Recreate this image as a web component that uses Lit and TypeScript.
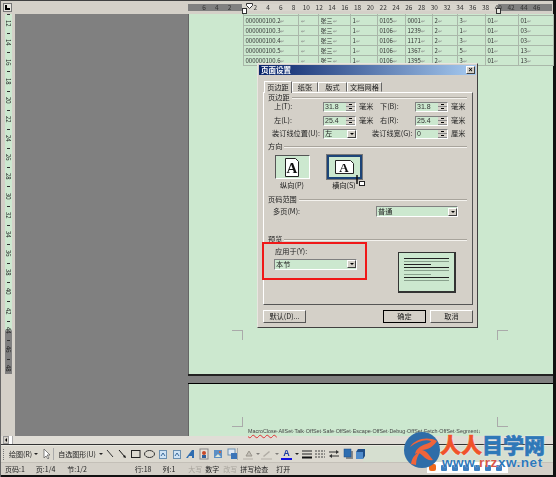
import { LitElement, html, css, svg } from "lit";
import { customElement } from "lit/decorators.js";

const rows = [
  ["000000100.2", "", "张三", "1", "0105", "0001", "2", "3", "01", "01"],
  ["000000100.3", "", "张三", "1", "0106", "1239", "2", "1", "01", "03"],
  ["000000100.4", "", "张三", "1", "0106", "1171", "2", "3", "01", "03"],
  ["000000100.5", "", "张三", "1", "0106", "1367", "2", "5", "01", "13"],
  ["000000100.6", "", "张三", "1", "0106", "1395", "2", "3", "01", "13"],
];
const hNums = ["6", "4", "2", "", "2", "4", "6", "8", "10", "12", "14", "16", "18", "20", "22", "24", "26", "28", "30", "32", "34", "36", "38", "40", "42", "44", "46"];
const vNums = Array.from({ length: 19 }, (_, i) => String(12 + i * 2));

@customElement("app-root")
export class AppRoot extends LitElement {
  static styles = css`
    :host { display: block; width: 556px; height: 477px; overflow: hidden; position: relative; background: #111; font-family: "Noto Sans CJK SC", "Liberation Sans", sans-serif; }
    .app { display: flex; flex-direction: column; width: 553px; height: 477px; border-top: 1px solid #404040; border-left: 1px solid #666; box-sizing: border-box; color: #222; font-size: 7px; line-height: 1; background: #d4d0c8; filter: blur(.25px); }

    .hruler { height: 13px; display: flex; align-items: flex-start; flex: none; position: relative; }
    .corner { width: 9px; height: 9px; margin: 2px 0 0 2px; border: 1px solid #777; box-sizing: border-box; background: #e8e6e0; display: flex; align-items: flex-end; padding: 1px; }
    .corner i { display: block; width: 5px; height: 5px; border-left: 2px solid #000; border-bottom: 2px solid #000; box-sizing: border-box; }
    .track { margin: 3px 0 0 176px; width: 364px; height: 7px; display: flex; padding-left: 9.6px; box-sizing: border-box; background: linear-gradient(to right, #808080 54px, #d8d5cd 54px, #d8d5cd 310px, #808080 310px); }
    .track span { width: 12.8px; flex: none; text-align: center; font-size: 6.5px; line-height: 7px; color: #333; }
    .indent { position: absolute; left: 245px; top: 2px; }
    .hang { position: absolute; left: 241px; top: 7px; width: 5px; height: 6px; background: #fff; border: 1px solid #333; box-sizing: border-box; }
    .hang.r { left: 495px; background: #e8e6e0; }

    .main { flex: 1; display: flex; min-height: 0; }
    .left { width: 14px; flex: none; display: flex; }
    .vtrack { width: 7px; margin-left: 4px; height: 360px; background: linear-gradient(to bottom, #cce8cf 315px, #808080 317px); overflow: hidden; }
    .vtrack span { display: flex; height: 19.17px; align-items: center; justify-content: center; font-size: 6px; writing-mode: vertical-rl; color: #222; background: linear-gradient(#333, #333) center top / 3px 1px no-repeat; }
    .canvas { flex: 1; min-width: 0; background: #808080; padding-left: 173px; display: flex; flex-direction: column; }
    .page { background: #cce8cf; position: relative; flex: none; border-left: 1px solid #666; }
    .page.one { height: 360px; }
    .page.two { height: 52px; }
    .gap { height: 10px; flex: none; border-top: 2px solid #222; border-bottom: 1px solid #000; box-sizing: border-box; }

    table { margin: 0 0 0 53.5px; width: 310.5px; border-collapse: collapse; table-layout: fixed; font-size: 6px; color: #333; }
    td { border: 1px solid #aab8aa; height: 9.97px; padding: 0 0 0 2px; white-space: nowrap; overflow: hidden; line-height: 8px; box-sizing: border-box; }
    tr.stub td { height: 1.7px; font-size: 0; line-height: 0; border-top: 0; }
    td small { color: #888; font-size: 5px; }

    .crop { position: absolute; width: 11px; height: 10px; border: 0 solid #aaa; box-sizing: border-box; }
    .crop.a { left: 43px; top: 316px; border-top-width: 1px; border-right-width: 1px; }
    .crop.b { left: 308px; top: 316px; border-top-width: 1px; border-left-width: 1px; }
    .crop.c { left: 43px; top: 33px; border-bottom-width: 1px; border-right-width: 1px; }
    .crop.d { left: 308px; top: 33px; border-bottom-width: 1px; border-left-width: 1px; }
    .footer { position: absolute; left: 59px; top: 43px; font: 5.4px/9px "Liberation Sans", sans-serif; color: #444; white-space: nowrap; }
    .footer u { text-decoration: underline wavy #d33 1px; }

    .hscroll { height: 8px; flex: none; display: flex; background: #e0ddd6; border-bottom: 1px solid #333; box-sizing: content-box; }
    .hscroll .sp { width: 2px; }
    .hscroll b { width: 6px; height: 8px; background: #d4d0c8; border: 1px solid #999; box-sizing: border-box; display: flex; align-items: center; justify-content: center; }
    .hscroll b i { border: 2px solid transparent; border-right-color: #000; border-left: 0; }
    .hscroll em { width: 3px; background: #fff; border-right: 1px solid #aaa; }

    .toolbar { height: 17px; flex: none; display: flex; align-items: center; background: linear-gradient(to right, #dcd9d0 362px, #d6dfd0 362px); position: relative; border-top: 1px solid #e8e8e0; box-sizing: border-box; padding-left: 2px; color: #222; }
    .grip { width: 1px; height: 11px; border-left: 1px dotted #777; margin-right: 4px; flex: none; }
    .toolbar svg { display: block; flex: none; }
    .sep { width: 1px; height: 12px; background: #aaa; flex: none; }
    .caret { width: 0; height: 0; border: 2px solid transparent; border-top: 2px solid #222; border-bottom: 0; flex: none; }
    .caret.dim { opacity: .5; }
    .tbtext { flex: none; white-space: nowrap; }
    .fontA { width: 11px; text-align: center; color: #1a3aa0; font: 700 9px/9px "Liberation Sans", sans-serif; border-bottom: 2px solid #1010e0; flex: none; }

    .status { height: 13px; flex: none; display: flex; align-items: center; background: #d4d0c8; white-space: nowrap; color: #222; border-top: 1px solid #c4c0b8; box-sizing: border-box; }
    .status span { flex: none; }
    .status .off { color: #a8a49c; }
    .bottom { height: 2px; flex: none; background: #111; }

    .dialog { position: absolute; left: 257px; top: 63px; width: 221px; height: 265px; box-sizing: border-box; background: #d4d0c8; border: 1px solid; border-color: #e8e6e0 #404040 #404040 #e8e6e0; padding: 1px; display: flex; flex-direction: column; font-size: 7.2px; line-height: 1; color: #222; filter: blur(.25px); }
    .title { height: 10px; flex: none; background: linear-gradient(to right, #0a246a, #a6caf0); color: #fff; font-size: 7.5px; font-weight: 700; line-height: 10px; padding-left: 2px; display: flex; justify-content: space-between; align-items: center; }
    .close { width: 9px; height: 8px; background: #d4d0c8; border: 1px solid; border-color: #fff #404040 #404040 #fff; box-sizing: border-box; margin-right: 1px; color: #000; font: 700 7px/6px "Liberation Sans", sans-serif; text-align: center; }
    .body { padding: 6px 3px 0 4px; display: flex; flex-direction: column; flex: 1; }
    .tabs { display: flex; height: 11px; padding-left: 1px; flex: none; position: relative; z-index: 1; }
    .tab { height: 10px; margin-top: 1px; border: 1px solid; border-color: #fff #666 transparent #fff; line-height: 9px; box-sizing: border-box; white-space: nowrap; text-align: center; flex: none; }
    .tab.on { height: 12px; margin-top: 0; line-height: 11px; background: #d4d0c8; border-bottom: 0; width: 28px; }
    .tab.w2 { width: 26px; }
    .tab.w3 { width: 29px; }
    .tab.w4 { width: 35px; }
    .panel { height: 213px; flex: none; box-sizing: border-box; border: 1px solid; border-color: #fff #555 #555 #fff; padding: 0 5px 0 4px; position: relative; }
    .legend { display: flex; align-items: center; gap: 2px; height: 10px; }
    .legend.first { height: 9px; }
    .legend::after { content: ""; flex: 1; border-top: 1px solid #a8a49c; border-bottom: 1px solid #f4f2ee; }
    .margins { display: grid; grid-template-columns: 49px 33px 24px 35px 33px auto; grid-auto-rows: 10px; row-gap: 3.5px; align-items: center; padding-left: 6px; }
    .lbl { white-space: nowrap; }
    .lbl.pos { margin-left: -2px; }
    .lbl.wid { margin-left: -8px; }
    .inp { height: 10px; width: 33px; box-sizing: border-box; background: #cce8cf; border: 1px solid; border-color: #808080 #fff #fff #808080; display: flex; align-items: center; justify-content: space-between; font: 7px/8px "Liberation Sans", sans-serif; padding-left: 1px; color: #333; }
    .spin { width: 9px; height: 8px; display: flex; flex-direction: column; background: #d4d0c8; flex: none; }
    .spin i { flex: 1; display: flex; align-items: center; justify-content: center; border-bottom: 1px solid #888; }
    .spin i::before { content: ""; width: 3px; height: 1px; background: #000; }
    .combo { height: 11px; box-sizing: border-box; background: #cce8cf; border: 1px solid; border-color: #808080 #fff #fff #808080; display: flex; align-items: center; justify-content: space-between; padding-left: 1px; color: #222; }
    .combo.small { height: 10px; width: 34px; }
    .arrow { width: 9px; height: 8px; background: #d4d0c8; border: 1px solid; border-color: #fff #404040 #404040 #fff; box-sizing: border-box; flex: none; display: flex; align-items: center; justify-content: center; }
    .arrow::before { content: ""; border: 2px solid transparent; border-top: 2px solid #000; border-bottom: 0; }
    .mm { padding-left: 3px; white-space: nowrap; }
    .sec1 { margin-top: 3px; }
    .dir { display: flex; margin: 3px 0 0 6px; gap: 16px; }
    .choice { width: 36px; display: flex; flex-direction: column; align-items: center; gap: 3px; white-space: nowrap; }
    .pic { width: 35px; height: 24px; box-sizing: border-box; background: #cce8cf; border: 1px solid; border-color: #555 #fff #fff #555; display: flex; align-items: center; justify-content: center; flex: none; }
    .pic.sel { border: 2px solid #1c4478; outline: 1px solid #777; }
    .sec2 { margin-top: 5.5px; }
    .multi { display: flex; justify-content: space-between; align-items: center; margin: 2px 9px 0 5px; height: 10px; }
    .multi .combo { width: 82px; }
    .sec3 { margin-top: 18px; }
    .prev { display: grid; grid-template-columns: 124px 58px; margin-top: 1px; padding-left: 6px; }
    .prev .combo { width: 83px; margin-top: 3px; }
    .applyl { padding-left: 1px; height: 10px; line-height: 10px; }
    .sheet { width: 58px; height: 41px; margin-top: 6px; box-sizing: border-box; background: #cce8cf; border: 1px solid #333; border-right-width: 2px; border-bottom-width: 2px; padding: 5px 5px 0 5px; display: flex; flex-direction: column; gap: 2.2px; }
    .sheet i { display: block; height: 1px; background: #222; }
    .sheet i.l { background: #88a08c; }
    .sheet i.s { width: 60%; }
    .red { position: absolute; left: -2px; top: 149px; width: 105px; height: 38px; border: 2px solid #f01818; box-sizing: border-box; pointer-events: none; }
    .btns { display: flex; margin-top: 5px; gap: 4px; }
    .btn { height: 13px; width: 43px; box-sizing: border-box; border: 1px solid; border-color: #fff #555 #555 #fff; text-align: center; line-height: 11px; white-space: nowrap; }
    .btn.def { outline: 1px solid #000; outline-offset: -1px; margin-left: 73px; }
    .cursor { position: absolute; left: 92px; top: 82px; }

    .mark { position: absolute; left: 403px; top: 431px; width: 150px; height: 46px; pointer-events: none; }
    .mark svg.logo { position: absolute; left: 0; top: 0; }
    .cn { position: absolute; left: 37px; top: 3px; font: 900 21px/21px "Noto Sans CJK SC", sans-serif; white-space: nowrap; color: #2f78b8; -webkit-text-stroke: .5px currentColor; text-shadow: 0 0 2px #fff; }
    .cn b { color: #f0522a; font-weight: 900; }
    .url { position: absolute; left: 39px; top: 25px; font: 700 13.6px/13px "Liberation Sans", sans-serif; letter-spacing: .5px; color: #2f78b8; white-space: nowrap; text-shadow: 0 0 1px #fff; }
    .url b { color: #d8574a; }
    .ime { position: absolute; left: 24px; top: 31px; width: 81px; height: 11px; background: #fff; display: flex; align-items: center; gap: 5px; padding-left: 2px; box-sizing: border-box; }
    .ime b { width: 7px; height: 7px; border-radius: 2px; background: #f06a1c; flex: none; }
    .ime i { width: 6px; height: 6px; background: #3f7fc0; flex: none; border-radius: 1px; }
  `;

  private icon(w: number, body: unknown, ml = 0) {
    return html`<svg width=${w} height="12" viewBox="0 0 ${w} 12" style="margin-left:${ml}px">${body}</svg>`;
  }

  private inp(v: string) {
    return html`<div class="inp">${v}<div class="spin"><i></i><i></i></div></div>`;
  }

  private m(px: number) {
    return `margin-left:${px}px`;
  }

  render() {
    const pic = svg`<rect x="1.5" y="2.5" width="7" height="8" fill="#cfe3f4" stroke="#6a8fb0"/><path d="M3 8l2-3 2 3" fill="none" stroke="#3a6a9a"/>`;
    return html`
      <div class="app">
        <div class="hruler">
          <div class="corner"><i></i></div>
          <div class="track">${hNums.map((n) => html`<span>${n}</span>`)}</div>
          <svg class="indent" width="7" height="6" viewBox="0 0 7 6"><path d="M.5.5h6v2l-3 3-3-3z" fill="#fff" stroke="#333"/></svg>
          <div class="hang"></div>
          <div class="hang r"></div>
        </div>
        <div class="main">
          <div class="left"><div class="vtrack">${vNums.map((n) => html`<span>${n}</span>`)}</div></div>
          <div class="canvas">
            <div class="page one">
              <table>
                <colgroup><col style="width:55px"><col style="width:20px"><col style="width:32px"><col style="width:27px"><col style="width:28px"><col style="width:27px"><col style="width:25px"><col style="width:28px"><col style="width:33px"><col style="width:35.5px"></colgroup>
                <tr class="stub">${rows[0].map(() => html`<td></td>`)}</tr>
                ${rows.map((r) => html`<tr>${r.map((c) => html`<td>${c}<small>↵</small></td>`)}</tr>`)}
              </table>
              <div class="crop a"></div><div class="crop b"></div>
            </div>
            <div class="gap"></div>
            <div class="page two">
              <div class="crop c"></div><div class="crop d"></div>
              <div class="footer"><u>MacroClose</u>·AllSet·Talk·OffSet·Safe·OffSet·Escape·OffSet·Debug·OffSet·Fetch·OffSet·Segment↓</div>
            </div>
          </div>
        </div>
        <div class="hscroll"><div class="sp"></div><b><i></i></b><em></em></div>
        <div class="toolbar">
          <div class="grip"></div>
          <span class="tbtext">绘图(R)</span>
          <div class="caret" style=${this.m(2)}></div>
          ${this.icon(8, svg`<path d="M2 1v9l2-2 2 3 1-1-2-3h3z" fill="#fff" stroke="#555" stroke-width=".7"/>`, 4)}
          <div class="sep" style=${this.m(3)}></div>
          <span class="tbtext" style=${this.m(4)}>自选图形(U)</span>
          <div class="caret" style=${this.m(3)}></div>
          ${this.icon(8, svg`<path d="M1 2l6 7" stroke="#333" fill="none"/>`, 3)}
          ${this.icon(9, svg`<path d="M1 2l6 7" stroke="#111" fill="none"/><path d="M8 10l-3-1 2-2z" fill="#111"/>`, 4)}
          ${this.icon(10, svg`<rect x=".5" y="2.5" width="8.5" height="7" fill="none" stroke="#222"/>`, 4)}
          ${this.icon(11, svg`<ellipse cx="5.5" cy="6" rx="5" ry="3.5" fill="none" stroke="#333"/>`, 3)}
          ${this.icon(10, pic, 3)}
          ${this.icon(10, pic, 4)}
          ${this.icon(10, svg`<path d="M1 10l6-8h2v8H7V8H4l-1 2z" fill="#2f6db0"/>`, 3)}
          ${this.icon(10, svg`<rect x="1" y="1" width="8" height="10" fill="#e6e0d8" stroke="#888"/><circle cx="5" cy="5" r="2" fill="#c84a2a"/><rect x="3" y="7" width="4" height="3" fill="#2f5f9a"/>`, 4)}
          ${this.icon(10, svg`<rect x="1" y="2" width="8" height="8" fill="#5c8fc4"/><path d="M2 9l3-3 3 3z" fill="#dfe8d8"/><circle cx="7" cy="4" r="1" fill="#e05a2a"/>`, 4)}
          ${this.icon(10, svg`<rect x="1" y="1" width="7" height="6" fill="#dfe8f4" stroke="#6a8fb0"/><rect x="4" y="5" width="6" height="6" fill="#3a74b8"/>`, 4)}
          <div class="sep"></div>
          ${this.icon(10, svg`<path d="M3 8l3-5 3 5z" fill="#c4c0b8" stroke="#99958c"/><rect x="0" y="10" width="10" height="2" fill="#c8c4bc"/>`, 5)}
          <div class="caret dim" style=${this.m(3)}></div>
          ${this.icon(11, svg`<path d="M2 8l6-5 1 1-6 5z" fill="#b0aca4"/><rect x="0" y="10" width="11" height="2" fill="#c8c4bc"/>`, 1)}
          <div class="caret dim" style=${this.m(3)}></div>
          <span class="fontA" style=${this.m(2)}>A</span>
          <div class="caret" style=${this.m(3)}></div>
          ${this.icon(10, svg`<path d="M0 3h10M0 6h10" stroke="#222"/><path d="M0 9.5h10" stroke="#111" stroke-width="2"/>`, 3)}
          ${this.icon(10, svg`<path d="M0 3h10M0 6h10M0 9h10" stroke="#444" stroke-dasharray="2 1"/>`, 3)}
          ${this.icon(10, svg`<path d="M0 4h8M10 8H2" stroke="#333"/><path d="M7 2l3 2-3 2zM3 6L0 8l3 2z" fill="#333"/>`, 4)}
          ${this.icon(10, svg`<rect x="3" y="3" width="7" height="8" fill="#888"/><rect x="1" y="1" width="7" height="8" fill="#2f6db0" stroke="#1f4f88" stroke-width=".5"/>`, 4)}
          ${this.icon(10, svg`<path d="M3 1h7v7l-2 3H1V4z" fill="#1f4f88"/><rect x="1" y="4" width="7" height="7" fill="#4f8ccc"/>`, 2)}
        </div>
        <div class="status">
          <span style=${this.m(4)}>页码:1</span>
          <span style=${this.m(11)}>页:1/4</span>
          <span style=${this.m(12)}>节:1/2</span>
          <span style=${this.m(48)}>行:18</span>
          <span style=${this.m(11)}>列:1</span>
          <span class="off" style=${this.m(13)}>大写</span>
          <span style=${this.m(3)}>数字</span>
          <span class="off" style=${this.m(4)}>改写</span>
          <span style=${this.m(3)}>拼写检查</span>
          <span style=${this.m(8)}>打开</span>
        </div>
        <div class="bottom"></div>
      </div>

      <div class="dialog">
        <div class="title"><span>页面设置</span><div class="close">×</div></div>
        <div class="body">
          <div class="tabs">
            <div class="tab on">页边距</div><div class="tab w2">纸张</div><div class="tab w3">版式</div><div class="tab w4">文档网格</div>
          </div>
          <div class="panel">
            <div class="legend first">页边距</div>
            <div class="margins">
              <span class="lbl">上(T):</span>${this.inp("31.8")}<span class="mm">毫米</span><span class="lbl">下(B):</span>${this.inp("31.8")}<span class="mm">毫米</span>
              <span class="lbl">左(L):</span>${this.inp("25.4")}<span class="mm">毫米</span><span class="lbl">右(R):</span>${this.inp("25.4")}<span class="mm">毫米</span>
              <span class="lbl pos">装订线位置(U):</span>
              <div class="combo small">左<div class="arrow"></div></div>
              <span></span>
              <span class="lbl wid">装订线宽(G):</span>${this.inp("0")}<span class="mm">厘米</span>
            </div>
            <div class="legend sec1">方向</div>
            <div class="dir">
              <div class="choice">
                <div class="pic"><svg width="14" height="19" viewBox="0 0 14 19"><path d="M.5.5h10l3 3v15H.5z" fill="#fff" stroke="#222"/><text x="7" y="15" text-anchor="middle" font-family="Liberation Serif" font-weight="700" font-size="15" fill="#111">A</text></svg></div>
                <span>纵向(P)</span>
              </div>
              <div class="choice">
                <div class="pic sel"><svg width="19" height="14" viewBox="0 0 19 14"><path d="M.5.5h15l3 3v10H.5z" fill="#fff" stroke="#222"/><text x="9" y="12" text-anchor="middle" font-family="Liberation Serif" font-weight="700" font-size="13" fill="#111">A</text></svg></div>
                <span>横向(S)</span>
              </div>
            </div>
            <div class="legend sec2">页码范围</div>
            <div class="multi"><span>多页(M):</span><div class="combo">普通<div class="arrow"></div></div></div>
            <div class="legend sec3">预览</div>
            <div class="prev">
              <div>
                <div class="applyl">应用于(Y):</div>
                <div class="combo">本节<div class="arrow"></div></div>
              </div>
              <div class="sheet"><i></i><i class="l"></i><i class="s"></i><i></i><i class="l"></i><i class="l s"></i><i></i><i class="l"></i></div>
            </div>
            <div class="red"></div>
            <svg class="cursor" width="9" height="11" viewBox="0 0 9 11"><path d="M1 0v9" stroke="#111" stroke-width="1.5"/><rect x="3.5" y="6.5" width="5" height="4" fill="#fff" stroke="#222"/></svg>
          </div>
          <div class="btns">
            <div class="btn">默认(D)...</div>
            <div class="btn def">确定</div>
            <div class="btn">取消</div>
          </div>
        </div>
      </div>

      <div class="mark">
        <div class="ime"><b></b><i></i><i></i><i></i><i></i><i></i><i></i></div>
        <svg class="logo" width="40" height="40" viewBox="0 0 40 40"><circle cx="19" cy="19" r="18" fill="#2f6da8"/><path d="M7 16C12 8 24 5 34 10c-3 5-9 9-15 9 5 1 7 5 11 10-4 1-7-1-10-4-3-3-5-4-8-2 1-5 5-8 11-10 3-1 5-2 5-3-6-2-13 0-21 6z" fill="#f0643a"/><path d="M8 33c1-7 5-11 10-13-3 4-5 8-5 14z" fill="#f0643a"/></svg>
        <div class="cn"><b>人人</b>目学网</div>
        <div class="url">www.<b>rrz</b>xw.net</div>
      </div>
    `;
  }
}
